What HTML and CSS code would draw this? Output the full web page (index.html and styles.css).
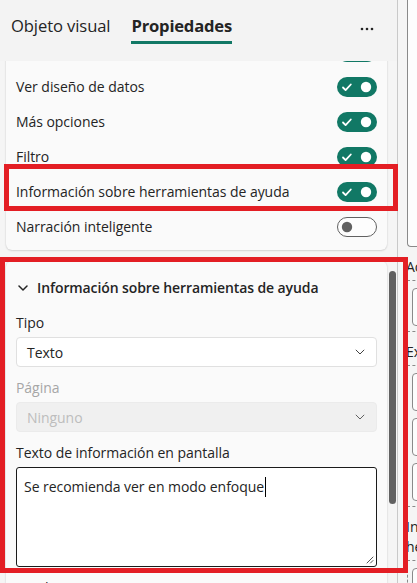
FILE: index.html
```html
<!DOCTYPE html>
<html lang="es">
<head>
<meta charset="utf-8">
<title>Propiedades</title>
<link rel="stylesheet" href="styles.css">
</head>
<body>
<div class="app">
  <div class="pane">
    <div class="tabs">
      <div class="tab">Objeto visual</div>
      <div class="tab active">Propiedades</div>
      <div class="more">
        <svg width="14" height="4" viewBox="0 0 14 4"><circle cx="2" cy="2" r="1.3" fill="#242424"/><circle cx="7" cy="2" r="1.3" fill="#242424"/><circle cx="12" cy="2" r="1.3" fill="#242424"/></svg>
      </div>
    </div>
    <div class="body">
      <div class="card top-card">
        <div class="row"><span>Encabezado del objeto visual</span>
          <svg class="toggle" width="40" height="20" viewBox="0 0 40 20"><rect width="40" height="20" rx="10" fill="#117865"/><path d="M6 10.5l2.6 2.6 5.2-5.6" stroke="#fff" stroke-width="1.8" fill="none" stroke-linecap="round" stroke-linejoin="round"/><circle cx="29" cy="10" r="5.2" fill="#fff"/></svg></div>
        <div class="row"><span>Ver diseño de datos</span>
          <svg class="toggle" width="40" height="20" viewBox="0 0 40 20"><rect width="40" height="20" rx="10" fill="#117865"/><path d="M6 10.5l2.6 2.6 5.2-5.6" stroke="#fff" stroke-width="1.8" fill="none" stroke-linecap="round" stroke-linejoin="round"/><circle cx="29" cy="10" r="5.2" fill="#fff"/></svg></div>
        <div class="row"><span>Más opciones</span>
          <svg class="toggle" width="40" height="20" viewBox="0 0 40 20"><rect width="40" height="20" rx="10" fill="#117865"/><path d="M6 10.5l2.6 2.6 5.2-5.6" stroke="#fff" stroke-width="1.8" fill="none" stroke-linecap="round" stroke-linejoin="round"/><circle cx="29" cy="10" r="5.2" fill="#fff"/></svg></div>
        <div class="row"><span>Filtro</span>
          <svg class="toggle" width="40" height="20" viewBox="0 0 40 20"><rect width="40" height="20" rx="10" fill="#117865"/><path d="M6 10.5l2.6 2.6 5.2-5.6" stroke="#fff" stroke-width="1.8" fill="none" stroke-linecap="round" stroke-linejoin="round"/><circle cx="29" cy="10" r="5.2" fill="#fff"/></svg></div>
        <div class="row"><span>Información sobre herramientas de ayuda</span>
          <svg class="toggle" width="40" height="20" viewBox="0 0 40 20"><rect width="40" height="20" rx="10" fill="#117865"/><path d="M6 10.5l2.6 2.6 5.2-5.6" stroke="#fff" stroke-width="1.8" fill="none" stroke-linecap="round" stroke-linejoin="round"/><circle cx="29" cy="10" r="5.2" fill="#fff"/></svg></div>
        <div class="row"><span>Narración inteligente</span>
          <svg class="toggle" width="40" height="20" viewBox="0 0 40 20"><rect x="0.5" y="0.5" width="39" height="19" rx="9.5" fill="#fdfdfd" stroke="#616161"/><circle cx="10" cy="10" r="5.2" fill="#616161"/></svg></div>
      </div>

      <div class="lower">
        <div class="card section">
          <div class="section-head">
            <svg class="chev" width="10" height="6" viewBox="0 0 10 6"><path d="M1 1l4 4 4-4" stroke="#242424" stroke-width="1.5" fill="none" stroke-linecap="round" stroke-linejoin="round"/></svg>
            <span>Información sobre herramientas de ayuda</span>
          </div>
          <div class="label">Tipo</div>
          <div class="select">
            <span>Texto</span>
            <svg width="10" height="6" viewBox="0 0 10 6"><path d="M0.8 0.8l4.2 4.2 4.2-4.2" stroke="#424242" stroke-width="1" fill="none"/></svg>
          </div>
          <div class="label disabled">Página</div>
          <div class="select disabled">
            <span>Ninguno</span>
            <svg width="10" height="6" viewBox="0 0 10 6"><path d="M0.8 0.8l4.2 4.2 4.2-4.2" stroke="#616161" stroke-width="1" fill="none"/></svg>
          </div>
          <div class="label">Texto de información en pantalla</div>
          <div class="textarea">
            <span>Se recomienda ver en modo enfoque</span><span class="caret"></span>
            <svg class="grip" width="9" height="9" viewBox="0 0 9 9"><path d="M8 2L2 8M8 5.5L5.5 8" stroke="#555" stroke-width="1" fill="none" stroke-linecap="round"/></svg>
          </div>
          <div class="label">Fondo</div>
        </div>
        <div class="track"><div class="thumb"></div></div>
      </div>
    </div>
  </div>

  <div class="side">
    <div class="side-box"></div>
    <div class="side-label">Acciones</div>
    <div class="dash"><div class="inner"></div></div>
    <div class="side-label">Ex</div>
    <div class="dash"><div class="inner"></div><div class="inner"></div><div class="inner short"></div></div>
    <div class="side-label two">Información<br>herramientas</div>
    <div class="dash"><div class="inner"></div></div>
  </div>

  <div class="mark mark-row"></div>
  <div class="mark mark-section"></div>
</div>
</body>
</html>
```

FILE: styles.css
```css
* { box-sizing: border-box; }
html, body { margin: 0; padding: 0; }
body {
  width: 417px;
  height: 583px;
  overflow: hidden;
  font-family: "Open Sans", "Noto Sans", sans-serif;
  color: #242424;
  background: #f3f3f3;
}
.app {
  position: relative;
  display: flex;
  width: 417px;
  height: 583px;
  overflow: hidden;
}
.pane {
  width: 398px;
  flex: none;
  display: flex;
  flex-direction: column;
  border-right: 1px solid #c9c9c9;
  background: #f5f5f5;
}
.tabs {
  height: 61px;
  flex: none;
  background: #f3f3f3;
  display: flex;
  align-items: flex-start;
  padding-left: 11px;
  position: relative;
  z-index: 2;
}
.tab {
  font-size: 16.6px;
  line-height: 22px;
  margin-top: 15px;
  padding-bottom: 4px;
  margin-right: 21px;
  border-bottom: 3px solid transparent;
  letter-spacing: -0.1px;
}
.tab.active {
  font-weight: 700;
  border-bottom-color: #117865;
  letter-spacing: -0.2px;
}
.more {
  margin-left: auto;
  margin-right: 23px;
  margin-top: 25px;
  line-height: 0;
}
.body {
  flex: 1;
  overflow: hidden;
  display: flex;
  flex-direction: column;
}
.card {
  background: #fafafa;
  border-radius: 6px;
  box-shadow: 0 0 2px rgba(0,0,0,0.12), 0 1px 2px rgba(0,0,0,0.10);
}
.top-card {
  margin: -27px 10px 0 6px;
  padding-bottom: 6px;
  flex: none;
}
.row {
  height: 35px;
  display: flex;
  align-items: center;
  justify-content: space-between;
  padding: 0 10px;
  font-size: 14px;
  letter-spacing: -0.05px;
}
.toggle { flex: none; display: block; }
.lower {
  margin-top: 11px;
  display: flex;
  flex: 1;
  min-height: 0;
}
.section {
  margin-left: 6px;
  width: 381px;
  flex: none;
  padding: 15px 10px 0 10px;
  border-bottom-left-radius: 0;
  border-bottom-right-radius: 0;
}
.track {
  flex: 1;
  padding: 10px 1px 0 2px;
}
.thumb {
  width: 7px;
  height: 233px;
  background: #616161;
  border-radius: 4px;
}
.section-head {
  display: flex;
  align-items: center;
  height: 22px;
  font-size: 14px;
  font-weight: 600;
  letter-spacing: -0.1px;
}
.chev { margin: 1px 9px 0 2px; flex: none; }
.label {
  font-size: 14px;
  line-height: 20px;
  margin-top: 11px;
  margin-bottom: 4px;
  letter-spacing: -0.05px;
}
.section-head + .label { margin-top: 15px; }
.label.disabled { color: #a6a6a6; }
.select {
  height: 30px;
  width: 361px;
  background: #fff;
  border: 1px solid #e0e0e0;
  border-radius: 4px;
  display: flex;
  align-items: center;
  justify-content: space-between;
  padding: 0 11px 0 10px;
  font-size: 14px;
  letter-spacing: -0.05px;
}
.select svg { display: block; }
.select.disabled {
  background: #f0f0f0;
  border-color: #ebebeb;
  color: #bdbdbd;
}
.textarea {
  position: relative;
  height: 100px;
  width: 361px;
  background: #fff;
  border: 1px solid #1b1b1b;
  border-radius: 3px;
  padding: 9px 7px;
  font-size: 14px;
  line-height: 20px;
  letter-spacing: -0.05px;
}
.caret {
  display: inline-block;
  width: 1px;
  height: 20px;
  background: #000;
  vertical-align: top;
  margin-left: 1px;
}
.grip {
  position: absolute;
  right: 2px;
  bottom: 2px;
}
.side {
  flex: 1;
  background: #f5f5f5;
  overflow: hidden;
  white-space: nowrap;
  font-size: 14px;
}
.side-box {
  margin-left: 9px;
  height: 247px;
  width: 30px;
  background: #fdfdfd;
  border-left: 1px solid #8a8a8a;
  border-bottom: 1px solid #8a8a8a;
  border-bottom-left-radius: 4px;
}
.side-label {
  margin-left: 8px;
  line-height: 20px;
  margin-top: 10px;
}
.dash {
  margin-left: 9px;
  margin-top: 3px;
  width: 30px;
  border: 1px dashed #8a8a8a;
  padding: 7px 0 5px 4px;
}
.inner {
  height: 38px;
  border: 1px solid #8a8a8a;
  border-radius: 4px;
  background: #fdfdfd;
}
.inner + .inner { margin-top: 7px; }
.mark {
  position: absolute;
  border: 5px solid #e31e24;
  pointer-events: none;
}
.mark-row {
  left: 4px;
  top: 164px;
  width: 394px;
  height: 47px;
}
.mark-section {
  left: 0;
  top: 257px;
  width: 408px;
  height: 316px;
}
```
